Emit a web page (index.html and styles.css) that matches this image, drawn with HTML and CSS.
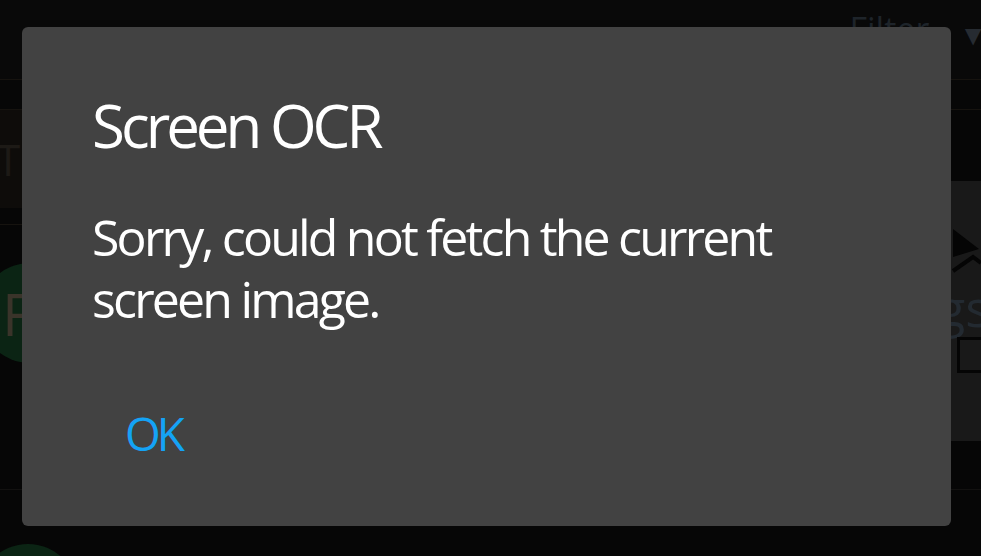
FILE: index.html
```html
<!DOCTYPE html>
<html lang="en">
<head>
    <meta charset="UTF-8">
    <meta name="viewport" content="width=device-width, initial-scale=1.0">
    <title>Screen OCR</title>
    <link rel="stylesheet" href="styles.css">
</head>
<body>
    <!-- dimmed app behind the dialog -->
    <div class="app">
        <div class="toolbar">
            <span class="filter">Filter</span>
            <span class="caret">&#9660;</span>
        </div>
        <div class="tabs"></div>
        <div class="section">
            <span class="section-letter">T</span>
        </div>
        <div class="list">
            <div class="list-row">
                <div class="avatar"><span>F</span></div>
                <div class="side-panel">
                    <svg class="side-icon" width="30" height="60" viewBox="0 0 30 60">
                        <path d="M2 2 L28 22 L2 30 Z" fill="#050505"/>
                        <path d="M2 44 L22 30 L30 36" fill="none" stroke="#050505" stroke-width="4"/>
                    </svg>
                    <span class="side-text">gs</span>
                    <div class="side-box"></div>
                </div>
            </div>
            <div class="list-row list-row-last">
                <div class="avatar avatar-small"></div>
            </div>
        </div>
    </div>

    <div class="dialog">
        <h1 class="dialog-title">Screen OCR</h1>
        <p class="dialog-text">Sorry, could not fetch the current screen image.</p>
        <div class="dialog-actions">
            <button type="button" class="dialog-button">OK</button>
        </div>
    </div>
</body>
</html>
```

FILE: styles.css
```css
body {
    margin: 0;
    width: 981px;
    height: 556px;
    overflow: hidden;
    background-color: #060606;
    font-family: 'Open Sans', 'Noto Sans', sans-serif;
    position: relative;
}

.app {
    display: flex;
    flex-direction: column;
    height: 100%;
    overflow: hidden;
}

.app > div {
    flex-shrink: 0;
}

.toolbar {
    height: 80px;
    border-bottom: 1px solid #16130f;
    background-color: #090909;
    display: flex;
    align-items: flex-start;
    justify-content: flex-end;
    box-sizing: border-box;
}

.filter {
    color: #1e242a;
    font-size: 34px;
    line-height: 1;
    margin-top: 12px;
    margin-right: 30px;
}

.caret {
    color: #262b31;
    font-size: 28px;
    line-height: 1;
    margin-top: 20px;
    margin-right: -6px;
}

.tabs {
    height: 29px;
    border-bottom: 1px solid #16130f;
    background-color: #070707;
}

.section {
    height: 98px;
    background: linear-gradient(to right, #0e0c0a 0, #0e0c0a 50%, #060606 50%);
    border-bottom: 16px solid #060606;
    box-shadow: 0 1px 0 #16130f;
    display: flex;
    align-items: center;
}

.section-letter {
    color: #1d1a16;
    font-size: 44px;
    margin-left: -4px;
}

.list {
    flex: 1;
    display: flex;
    flex-direction: column;
}

.list-row {
    height: 265px;
    flex-shrink: 0;
    border-bottom: 1px solid #121110;
    display: flex;
    justify-content: space-between;
    align-items: flex-start;
}

.list-row-last {
    border-bottom: none;
    height: auto;
    flex: 1;
}

.avatar {
    width: 100px;
    height: 100px;
    border-radius: 50%;
    background-color: #0b2414;
    margin-left: -20px;
    margin-top: 39px;
    display: flex;
    align-items: center;
}

.avatar span {
    color: #3a342a;
    font-size: 58px;
    margin-left: 22px;
}

.avatar-small {
    margin-top: 54px;
    margin-left: -22px;
}

.side-panel {
    width: 30px;
    height: 260px;
    margin-top: -43px;
    background-color: #191919;
    display: flex;
    flex-direction: column;
    align-items: flex-start;
    overflow: hidden;
}

.side-icon {
    margin-top: 46px;
}

.side-text {
    color: #232a31;
    font-size: 52px;
    line-height: 1;
    margin-left: -14px;
    margin-top: -6px;
}

.side-box {
    width: 40px;
    height: 30px;
    border: 3px solid #050505;
    margin-top: 4px;
    margin-left: 6px;
}

.dialog {
    position: absolute;
    left: 22px;
    top: 27px;
    width: 929px;
    height: 499px;
    box-sizing: border-box;
    background-color: #424242;
    border-radius: 6px;
    padding: 62px 70px 0 70px;
}

.dialog-title {
    margin: 0;
    color: #ffffff;
    font-size: 60px;
    font-weight: 400;
    line-height: 72px;
    letter-spacing: -4px;
}

.dialog-text {
    margin: 45px 0 0 0;
    color: #ffffff;
    font-size: 50px;
    line-height: 62px;
    letter-spacing: -2.8px;
    max-width: 760px;
}

.dialog-actions {
    margin-top: 71px;
}

.dialog-button {
    background: none;
    border: none;
    padding: 0 0 0 33px;
    margin: 0;
    color: #14a3f5;
    font-family: 'Open Sans', 'Noto Sans', sans-serif;
    font-size: 46px;
    line-height: 64px;
    letter-spacing: -4px;
    cursor: pointer;
}
```
